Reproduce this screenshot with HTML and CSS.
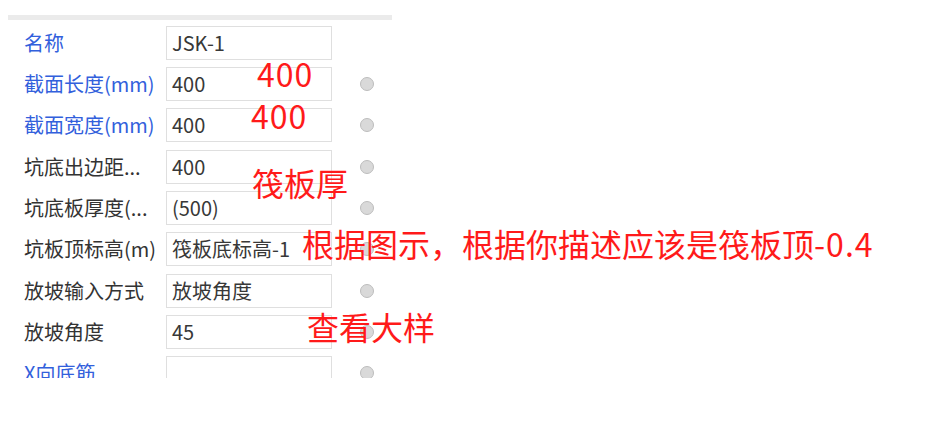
FILE: index.html
```html
<!DOCTYPE html>
<html lang="zh">
<head>
<meta charset="utf-8">
<title>属性</title>
<link rel="stylesheet" href="styles.css">
</head>
<body>
<div class="panel">
  <div class="topbar"></div>
  <div class="rows">
    <div class="row"><span class="label blue">名称</span><span class="field">JSK-1</span><span class="slot"></span></div>
    <div class="row"><span class="label blue">截面长度(mm)</span><span class="field">400</span><span class="slot"><span class="dot"></span></span></div>
    <div class="row"><span class="label blue">截面宽度(mm)</span><span class="field">400</span><span class="slot"><span class="dot"></span></span></div>
    <div class="row"><span class="label">坑底出边距...</span><span class="field">400</span><span class="slot"><span class="dot"></span></span></div>
    <div class="row"><span class="label">坑底板厚度(...</span><span class="field">(500)</span><span class="slot"><span class="dot"></span></span></div>
    <div class="row"><span class="label">坑板顶标高(m)</span><span class="field">筏板底标高-1</span><span class="slot"><span class="dot"></span></span></div>
    <div class="row"><span class="label">放坡输入方式</span><span class="field">放坡角度</span><span class="slot"><span class="dot"></span></span></div>
    <div class="row"><span class="label">放坡角度</span><span class="field">45</span><span class="slot"><span class="dot"></span></span></div>
    <div class="row"><span class="label blue">X向底筋</span><span class="field"></span><span class="slot"><span class="dot"></span></span></div>
  </div>
</div>
<div class="note note-a">400</div>
<div class="note note-b">400</div>
<div class="note note-c">筏板厚</div>
<div class="note note-d">根据图示，根据你描述应该是筏板顶<span class="num">-0.4</span></div>
<div class="note note-e">查看大样</div>
</body>
</html>
```
FILE: styles.css
```css
html, body {
  margin: 0;
  padding: 0;
  background: #ffffff;
}
body {
  position: relative;
  width: 934px;
  height: 421px;
  overflow: hidden;
  font-family: "Noto Sans CJK SC", "Noto Sans", sans-serif;
}
.panel {
  margin-left: 8px;
  width: 384px;
  padding-top: 15px;
}
.topbar {
  height: 5px;
  background: #ebebeb;
}
.rows {
  margin-top: 2px;
  height: 356px;
  overflow: hidden;
  display: grid;
  grid-auto-rows: 41.33px;
}
.row {
  display: grid;
  grid-template-columns: 142px 166px 1fr;
  align-items: center;
  padding-left: 16px;
}
.label {
  font-size: 20px;
  line-height: 28px;
  color: #333333;
  white-space: nowrap;
  overflow: hidden;
}
.label.blue {
  color: #3260dc;
}
.field {
  box-sizing: border-box;
  height: 34px;
  border: 1px solid #dfdfdf;
  padding-left: 5px;
  font-size: 20px;
  line-height: 31px;
  color: #383838;
  white-space: nowrap;
  overflow: hidden;
}
.slot {
  display: flex;
  align-items: center;
  padding-left: 28px;
}
.dot {
  box-sizing: border-box;
  width: 14px;
  height: 14px;
  border-radius: 50%;
  background: #d9d9d9;
  border: 1px solid #bdbdbd;
}
.note {
  position: absolute;
  font-size: 32px;
  line-height: 32px;
  color: #ff1a1a;
  white-space: nowrap;
}
.note-a { left: 257px; top: 57px; letter-spacing: 1px; }
.note-b { left: 251px; top: 99px; letter-spacing: 1px; }
.note-c { left: 252px; top: 166px; }
.note-d { left: 302px; top: 227px; }
.note-d .num { letter-spacing: 1px; }
.note-e { left: 307px; top: 310px; }
```
